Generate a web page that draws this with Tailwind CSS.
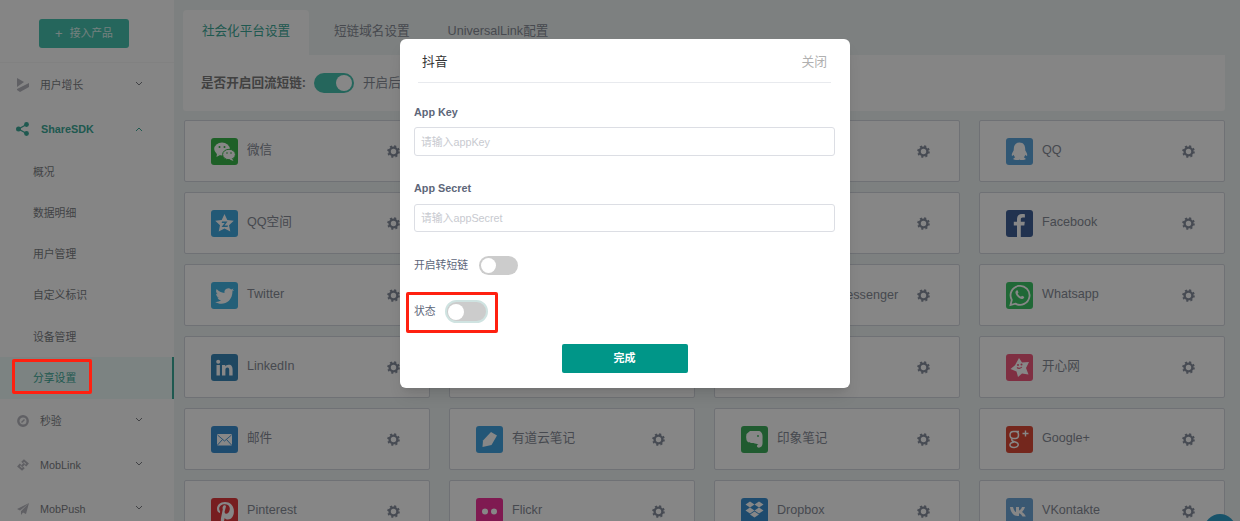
<!DOCTYPE html>
<html lang="zh">

<head>
    <meta charset="UTF-8">
    <title>分享设置</title>
    <script src="https://cdn.jsdelivr.net/npm/@tailwindcss/browser@4"></script>
</head>

<body class="relative h-[521px] overflow-hidden bg-[#edf2f1] font-['Liberation_Sans','Noto_Sans_CJK_SC',sans-serif]">

    <svg class="hidden">
        <symbol id="gear" viewBox="0 0 14 14">
            <circle cx="7" cy="7" r="4.2" fill="none" stroke="currentColor" stroke-width="2.6" />
            <circle cx="7" cy="7" r="5.9" fill="none" stroke="currentColor" stroke-width="1.8" stroke-dasharray="2.3 2.33" />
        </symbol>
        <symbol id="down" viewBox="0 0 8 5">
            <path d="M1 1l3 3 3-3" fill="none" stroke="currentColor" stroke-width="1" />
        </symbol>
    </svg>

    <div class="flex h-full">
        <!-- sidebar -->
        <aside class="w-[174px] shrink-0 bg-[#fbfbfb] text-[10.8px] text-[#7c7e83]">
            <div class="h-[63px] border-b border-[#f3f3f3] pt-[19px] pl-[39px]">
                <button class="flex h-[29px] w-[90px] items-center justify-center gap-[7px] rounded-[3px] bg-[#46c0ae] text-white/80">
                    <span class="text-[13px] leading-none">+</span><span>接入产品</span>
                </button>
            </div>
            <div class="flex h-[44px] items-center pr-[31px] pl-[17px]">
                <svg class="mr-[11px] h-[14px] w-[12px]" viewBox="0 0 12 14" fill="#b5b5bd">
                    <path d="M0 0l7 4-7 5zM12 5v4l-9 5-3-2v-1z" />
                </svg>
                <span>用户增长</span>
                <svg class="mb-[3px] ml-auto h-[5px] w-[8px]"><use href="#down" /></svg>
            </div>
            <div class="flex h-[44px] items-center pr-[31px] pl-[16px] font-bold text-[#3ca897]">
                <svg class="mr-[12px] h-[14px] w-[13px]" viewBox="0 0 13 14" fill="currentColor">
                    <circle cx="10.5" cy="2.5" r="2.4" /><circle cx="2.5" cy="7" r="2.5" /><circle cx="10.5" cy="11.5" r="2.4" />
                    <path d="M10.5 2.5L2.5 7l8 4.5" fill="none" stroke="currentColor" stroke-width="1.3" />
                </svg>
                <span>ShareSDK</span>
                <svg class="ml-auto h-[5px] w-[8px] rotate-180"><use href="#down" /></svg>
            </div>
            <div class="flex h-[41.25px] items-center pl-[33px]">概况</div>
            <div class="flex h-[41.25px] items-center pl-[33px]">数据明细</div>
            <div class="flex h-[41.25px] items-center pl-[33px]">用户管理</div>
            <div class="flex h-[41.25px] items-center pl-[33px]">自定义标识</div>
            <div class="flex h-[41.25px] items-center pl-[33px]">设备管理</div>
            <div class="flex h-[41.75px] items-center border-r-2 border-[#3ca897] bg-[#eaf8f5] pl-[33px] text-[#3ca897]">分享设置</div>
            <div class="flex h-[44px] items-center pr-[31px] pl-[17px]">
                <svg class="mr-[11px] h-[12px] w-[12px]" viewBox="0 0 12 12">
                    <circle cx="6" cy="6" r="4.7" fill="none" stroke="#b5b5bd" stroke-width="2.4" />
                    <path d="M4.5 7.5L7.5 4.5" stroke="#b5b5bd" stroke-width="1.4" />
                </svg>
                <span>秒验</span>
                <svg class="mb-[3px] ml-auto h-[5px] w-[8px]"><use href="#down" /></svg>
            </div>
            <div class="flex h-[44px] items-center pr-[31px] pl-[17px]">
                <svg class="mr-[11px] h-[12px] w-[12px]" viewBox="0 0 12 12" fill="none" stroke="#b5b5bd" stroke-width="2">
                    <path d="M5 3.5L7 1.5l3.5 3-2 2.300M7 8.500L5 10.500l-3.500-3 2-2.300M4.500 7.500l3-3" />
                </svg>
                <span>MobLink</span>
                <svg class="mb-[3px] ml-auto h-[5px] w-[8px]"><use href="#down" /></svg>
            </div>
            <div class="flex h-[44px] items-center pr-[31px] pl-[17px]">
                <svg class="mr-[11px] h-[12px] w-[12px]" viewBox="0 0 12 12" fill="#b5b5bd">
                    <path d="M12 0L0 6l3 1.600zM12 0L4 8.200V12l2-2.600 3 1.600z" />
                </svg>
                <span>MobPush</span>
                <svg class="mb-[3px] ml-auto h-[5px] w-[8px]"><use href="#down" /></svg>
            </div>
        </aside>

        <!-- main -->
        <main class="w-[1051px] pt-[10px] pl-[9px] text-[12.6px] text-[#868b96]">
            <div class="flex h-[45px] items-center">
                <div class="flex h-full w-[126px] items-center justify-center rounded-t-[4px] bg-[#fbfbfb] pb-[2px] text-[#3ca897]">社会化平台设置</div>
                <div class="ml-[25px] pb-[2px]">短链域名设置</div>
                <div class="ml-[38px] pb-[2px]">UniversalLink配置</div>
            </div>
            <div class="flex h-[56px] items-center rounded-b-[3px] bg-[#fbfbfb] pl-[18px]">
                <span class="font-bold text-[#7c7c7c]">是否开启回流短链:</span>
                <span class="ml-[8px] flex h-[20px] w-[40px] items-center justify-end rounded-full bg-[#46c0ae] pr-[2px]"><span class="h-[16px] w-[16px] rounded-full bg-white"></span></span>
                <span class="ml-[9px]">开启后</span>
            </div>
            <div class="mt-[9px] grid grid-cols-[repeat(4,246px)] gap-x-[19px] gap-y-[10px] pl-[1px]">

                <div class="flex h-[62px] items-center rounded-[2px] border border-[#d2d6de] bg-[#fdfdfd] pr-[29px] pl-[26px]">
                    <svg class="h-[27px] w-[27px]" viewBox="0 0 27 27"><rect width="27" height="27" rx="3" fill="#39b54a" /><ellipse cx="11" cy="11" rx="7.800" ry="6.400" fill="#fff" /><path d="M6 15.500l-.5 3.500 3.500-2z" fill="#fff" /><ellipse cx="18" cy="16.500" rx="6.400" ry="5.200" fill="#fff" stroke="#39b54a" /><path d="M21 20.500l1.500 2.500-4-1.500z" fill="#fff" /><circle cx="8.500" cy="9" r="1" fill="#39b54a" /><circle cx="13.500" cy="9" r="1" fill="#39b54a" /><circle cx="16" cy="15" r=".8" fill="#39b54a" /><circle cx="20" cy="15" r=".8" fill="#39b54a" /></svg>
                    <span class="mb-[1px] ml-[9px]">微信</span>
                    <svg class="ml-auto h-[13px] w-[13px] text-[#868e9d]"><use href="#gear" /></svg>
                </div>
                <div class="flex h-[62px] items-center rounded-[2px] border border-[#d2d6de] bg-[#fdfdfd] pr-[29px] pl-[26px]">
                    <svg class="ml-auto h-[13px] w-[13px] text-[#868e9d]"><use href="#gear" /></svg>
                </div>
                <div class="flex h-[62px] items-center rounded-[2px] border border-[#d2d6de] bg-[#fdfdfd] pr-[29px] pl-[26px]">
                    <svg class="ml-auto h-[13px] w-[13px] text-[#868e9d]"><use href="#gear" /></svg>
                </div>
                <div class="flex h-[62px] items-center rounded-[2px] border border-[#d2d6de] bg-[#fdfdfd] pr-[29px] pl-[26px]">
                    <svg class="h-[27px] w-[27px]" viewBox="0 0 27 27"><rect width="27" height="27" rx="3" fill="#5ba4dc" /><path d="M13.500 4.500c-4 0-5.700 3-5.700 6.300 0 1.200-.1 1.700-.6 2.500-1 1.600-1.700 3.200-1.300 4.500.5.500 1.200-.3 1.700-1 .4 1.300 1 2 1.500 2.600-1.300.5-2 1.100-1.700 1.800.6.800 5.500 1 6.100.2.600.8 5.500.6 6.100-.2.300-.7-.4-1.300-1.700-1.800.5-.6 1.100-1.300 1.500-2.600.5.700 1.200 1.500 1.700 1 .4-1.300-.3-2.900-1.300-4.500-.5-.8-.6-1.300-.6-2.500 0-3.300-1.700-6.300-5.700-6.300z" fill="#fff" /></svg>
                    <span class="mb-[1px] ml-[9px]">QQ</span>
                    <svg class="ml-auto h-[13px] w-[13px] text-[#868e9d]"><use href="#gear" /></svg>
                </div>

                <div class="flex h-[62px] items-center rounded-[2px] border border-[#d2d6de] bg-[#fdfdfd] pr-[29px] pl-[26px]">
                    <svg class="h-[27px] w-[27px]" viewBox="0 0 27 27"><rect width="27" height="27" rx="3" fill="#41a8df" /><path d="M13.500 4l2.800 6 6.500.8-4.800 4.400 1.300 6.400-5.800-3.200-5.800 3.200 1.300-6.400-4.800-4.400 6.500-.8z" fill="#fff" /><path d="M11 11.500h5.500l-3 4h3.500l-.5 1.500h-6l3.200-4h-3z" fill="#41a8df" /></svg>
                    <span class="mb-[1px] ml-[9px]">QQ空间</span>
                    <svg class="ml-auto h-[13px] w-[13px] text-[#868e9d]"><use href="#gear" /></svg>
                </div>
                <div class="flex h-[62px] items-center rounded-[2px] border border-[#d2d6de] bg-[#fdfdfd] pr-[29px] pl-[26px]">
                    <svg class="ml-auto h-[13px] w-[13px] text-[#868e9d]"><use href="#gear" /></svg>
                </div>
                <div class="flex h-[62px] items-center rounded-[2px] border border-[#d2d6de] bg-[#fdfdfd] pr-[29px] pl-[26px]">
                    <svg class="ml-auto h-[13px] w-[13px] text-[#868e9d]"><use href="#gear" /></svg>
                </div>
                <div class="flex h-[62px] items-center rounded-[2px] border border-[#d2d6de] bg-[#fdfdfd] pr-[29px] pl-[26px]">
                    <svg class="h-[27px] w-[27px]" viewBox="0 0 27 27"><rect width="27" height="27" rx="3" fill="#3f5f95" /><path d="M14.800 27V15.500h3.500l.5-3.800h-4v-2.300c0-1.200.5-1.900 1.900-1.900h2.200V4.200c-.6-.1-1.700-.2-2.900-.2-3 0-5 1.800-5 5v2.700H7.800v3.800H11V27z" fill="#fff" /></svg>
                    <span class="mb-[1px] ml-[9px]">Facebook</span>
                    <svg class="ml-auto h-[13px] w-[13px] text-[#868e9d]"><use href="#gear" /></svg>
                </div>

                <div class="flex h-[62px] items-center rounded-[2px] border border-[#d2d6de] bg-[#fdfdfd] pr-[29px] pl-[26px]">
                    <svg class="h-[27px] w-[27px]" viewBox="0 0 27 27"><rect width="27" height="27" rx="3" fill="#42b4e3" /><path d="M23 8c-.7.3-1.400.5-2.200.6.800-.5 1.400-1.200 1.700-2.100-.7.400-1.600.8-2.400.9a3.900 3.900 0 0 0-6.600 3.500C10.300 10.800 7.500 9.300 5.600 7c-1 1.800-.5 4 1.200 5.200-.6 0-1.200-.2-1.700-.5 0 1.900 1.300 3.500 3.100 3.900-.6.100-1.200.2-1.800 0 .5 1.500 1.900 2.600 3.600 2.700-1.700 1.300-3.700 1.900-5.800 1.600 6.600 4.200 17.300 1 17.300-11C22 9.400 22.600 8.700 23 8z" fill="#fff" /></svg>
                    <span class="mb-[1px] ml-[9px]">Twitter</span>
                    <svg class="ml-auto h-[13px] w-[13px] text-[#868e9d]"><use href="#gear" /></svg>
                </div>
                <div class="flex h-[62px] items-center rounded-[2px] border border-[#d2d6de] bg-[#fdfdfd] pr-[29px] pl-[26px]">
                    <svg class="ml-auto h-[13px] w-[13px] text-[#868e9d]"><use href="#gear" /></svg>
                </div>
                <div class="flex h-[62px] items-center rounded-[2px] border border-[#d2d6de] bg-[#fdfdfd] pr-[29px] pl-[26px]">
                    <span class="ml-[36px]">Facebook Messenger</span>
                    <svg class="ml-auto h-[13px] w-[13px] text-[#868e9d]"><use href="#gear" /></svg>
                </div>
                <div class="flex h-[62px] items-center rounded-[2px] border border-[#d2d6de] bg-[#fdfdfd] pr-[29px] pl-[26px]">
                    <svg class="h-[27px] w-[27px]" viewBox="0 0 27 27"><rect width="27" height="27" rx="3" fill="#3ec567" /><path d="M4.500 23l1.300-5a9.500 9.500 0 1 1 3.600 3.600z" fill="none" stroke="#fff" stroke-width="1.800" /><path d="M10.500 8.500c-1.500 1-1.500 3 .5 5.500s4.500 3.500 6 2.800c1-.5 1.500-1.500 1-2l-2-1-1 1c-1.200-.3-2.800-1.800-3.300-3.200l.8-1-.8-2.200c-.4-.3-.8-.2-1.200.1z" fill="#fff" /></svg>
                    <span class="mb-[1px] ml-[9px]">Whatsapp</span>
                    <svg class="ml-auto h-[13px] w-[13px] text-[#868e9d]"><use href="#gear" /></svg>
                </div>

                <div class="flex h-[62px] items-center rounded-[2px] border border-[#d2d6de] bg-[#fdfdfd] pr-[29px] pl-[26px]">
                    <svg class="h-[27px] w-[27px]" viewBox="0 0 27 27"><rect width="27" height="27" rx="3" fill="#3a87b8" /><path d="M5.500 11h3.400v10.500H5.500z" fill="#fff" /><circle cx="7.200" cy="7.700" r="2" fill="#fff" /><path d="M11 11h3.200v1.500c.6-1 1.800-1.800 3.400-1.800 3.200 0 4 2.100 4 5v5.800h-3.400v-5.200c0-1.400-.3-2.700-1.800-2.700s-2 1.200-2 2.600v5.300H11z" fill="#fff" /></svg>
                    <span class="mb-[1px] ml-[9px]">LinkedIn</span>
                    <svg class="ml-auto h-[13px] w-[13px] text-[#868e9d]"><use href="#gear" /></svg>
                </div>
                <div class="flex h-[62px] items-center rounded-[2px] border border-[#d2d6de] bg-[#fdfdfd] pr-[29px] pl-[26px]">
                    <svg class="ml-auto h-[13px] w-[13px] text-[#868e9d]"><use href="#gear" /></svg>
                </div>
                <div class="flex h-[62px] items-center rounded-[2px] border border-[#d2d6de] bg-[#fdfdfd] pr-[29px] pl-[26px]">
                    <svg class="ml-auto h-[13px] w-[13px] text-[#868e9d]"><use href="#gear" /></svg>
                </div>
                <div class="flex h-[62px] items-center rounded-[2px] border border-[#d2d6de] bg-[#fdfdfd] pr-[29px] pl-[26px]">
                    <svg class="h-[27px] w-[27px]" viewBox="0 0 27 27"><rect width="27" height="27" rx="3" fill="#f05a7e" /><path d="M13 4l3 4.500 7-.5-3 6 2.500 6.500-6.500-1-4 3.500-1.500-5.500-6-2.500 4.500-3.800z" fill="#fff" /><circle cx="12" cy="11" r="1" fill="#f05a7e" /><circle cx="15.500" cy="10.500" r="1" fill="#f05a7e" /><path d="M11 13.500c1.200 1.200 3.500 1.200 4.800-.5" fill="none" stroke="#f05a7e" stroke-width="1.200" /></svg>
                    <span class="mb-[1px] ml-[9px]">开心网</span>
                    <svg class="ml-auto h-[13px] w-[13px] text-[#868e9d]"><use href="#gear" /></svg>
                </div>

                <div class="flex h-[62px] items-center rounded-[2px] border border-[#d2d6de] bg-[#fdfdfd] pr-[29px] pl-[26px]">
                    <svg class="h-[27px] w-[27px]" viewBox="0 0 27 27"><rect width="27" height="27" rx="3" fill="#3a8fd0" /><rect x="6" y="8" width="15" height="11.500" rx="1" fill="#fff" /><path d="M6.500 9l7 6 7-6M6.500 19l5-5.500M20.500 19l-5-5.500" fill="none" stroke="#3a8fd0" stroke-width=".9" /></svg>
                    <span class="mb-[1px] ml-[9px]">邮件</span>
                    <svg class="ml-auto h-[13px] w-[13px] text-[#868e9d]"><use href="#gear" /></svg>
                </div>
                <div class="flex h-[62px] items-center rounded-[2px] border border-[#d2d6de] bg-[#fdfdfd] pr-[29px] pl-[26px]">
                    <svg class="h-[27px] w-[27px]" viewBox="0 0 27 27"><rect width="27" height="27" rx="3" fill="#41a3e0" /><path d="M15 6l6 3.500-5.500 9.500-9 2 .5-6.500z" fill="#fff" /></svg>
                    <span class="mb-[1px] ml-[9px]">有道云笔记</span>
                    <svg class="ml-auto h-[13px] w-[13px] text-[#868e9d]"><use href="#gear" /></svg>
                </div>
                <div class="flex h-[62px] items-center rounded-[2px] border border-[#d2d6de] bg-[#fdfdfd] pr-[29px] pl-[26px]">
                    <svg class="h-[27px] w-[27px]" viewBox="0 0 27 27"><rect width="27" height="27" rx="3" fill="#3dad5b" /><path d="M9 5h9c3 .5 4 4 3.500 8 0 3 .5 6-1 7.500-1.500 1.500-4 1.500-4.500 0-.3-1.200.8-2 2-1.500-1.500-1.500-4-1-5.500-2C10 17 6.500 17 5.500 14c-.5-2-.5-4 0-6z" fill="#fff" /><circle cx="17" cy="10" r=".9" fill="#3dad5b" /></svg>
                    <span class="mb-[1px] ml-[9px]">印象笔记</span>
                    <svg class="ml-auto h-[13px] w-[13px] text-[#868e9d]"><use href="#gear" /></svg>
                </div>
                <div class="flex h-[62px] items-center rounded-[2px] border border-[#d2d6de] bg-[#fdfdfd] pr-[29px] pl-[26px]">
                    <svg class="h-[27px] w-[27px]" viewBox="0 0 27 27"><rect width="27" height="27" rx="3" fill="#dc4b38" /><path d="M11 5.500H7.500C5.500 5.500 4 7 4 9s1.500 3.500 3.500 3.500h2c1.800 0 3-1.500 3-3.500s-1.200-3.500-3-3.500zM6.500 12.500c-1 .8-1 1.800 0 2.500l4 1.500c2.200 1 2 2.800 1 3.800-1.500 1.400-5 1.500-6.700.3-1.400-1-1-3 .7-3.800l2.500-.8M10 5.500h3" fill="none" stroke="#fff" stroke-width="1.500" /><path d="M16.500 7.500h6M19.500 4.500v6" stroke="#fff" stroke-width="1.400" /></svg>
                    <span class="mb-[1px] ml-[9px]">Google+</span>
                    <svg class="ml-auto h-[13px] w-[13px] text-[#868e9d]"><use href="#gear" /></svg>
                </div>

                <div class="flex h-[62px] items-center rounded-[2px] border border-[#d2d6de] bg-[#fdfdfd] pr-[29px] pl-[26px]">
                    <svg class="h-[27px] w-[27px]" viewBox="0 0 27 27"><rect width="27" height="27" rx="3" fill="#e03a3e" /><path d="M14 4c-5 0-8 3.200-8 6.800 0 2 1 3.700 2.500 4.200.5 0 .8-1.300.5-1.800-2.300-3.500.6-7 4.700-7 4 0 5.500 2.500 5 5.500-.5 3-2.500 4.500-4 4-1-.5-1.300-1.200-1-2.400l1.200-4.500c.3-2-2.800-2.500-3.300.5-.1.800 0 1.500.2 2L10 20c-.3 2 0 5 .2 7h1c1-1.500 2-4.500 2.500-7 .8 1 2 1.500 3.200 1.500 3.500 0 6-3.500 6-8C23 8 19.500 4 14 4z" fill="#fff" /></svg>
                    <span class="mb-[1px] ml-[9px]">Pinterest</span>
                    <svg class="ml-auto h-[13px] w-[13px] text-[#868e9d]"><use href="#gear" /></svg>
                </div>
                <div class="flex h-[62px] items-center rounded-[2px] border border-[#d2d6de] bg-[#fdfdfd] pr-[29px] pl-[26px]">
                    <svg class="h-[27px] w-[27px]" viewBox="0 0 27 27"><rect width="27" height="27" rx="3" fill="#f0329a" /><circle cx="9" cy="13.500" r="3" fill="#fff" /><circle cx="18" cy="13.500" r="3" fill="#fff" /></svg>
                    <span class="mb-[1px] ml-[9px]">Flickr</span>
                    <svg class="ml-auto h-[13px] w-[13px] text-[#868e9d]"><use href="#gear" /></svg>
                </div>
                <div class="flex h-[62px] items-center rounded-[2px] border border-[#d2d6de] bg-[#fdfdfd] pr-[29px] pl-[26px]">
                    <svg class="h-[27px] w-[27px]" viewBox="0 0 27 27"><rect width="27" height="27" rx="3" fill="#3a8fd0" /><path d="M9 3.500l4.500 3-4.500 3-4.500-3zM18 3.500l4.500 3-4.500 3-4.500-3zM9 9.500l4.500 3-4.500 3-4.500-3zM18 9.500l4.500 3-4.500 3-4.500-3zM13.500 13.500l4.500 3-4.500 3-4.500-3z" fill="#fff" /></svg>
                    <span class="mb-[1px] ml-[9px]">Dropbox</span>
                    <svg class="ml-auto h-[13px] w-[13px] text-[#868e9d]"><use href="#gear" /></svg>
                </div>
                <div class="flex h-[62px] items-center rounded-[2px] border border-[#d2d6de] bg-[#fdfdfd] pr-[29px] pl-[26px]">
                    <svg class="h-[27px] w-[27px]" viewBox="0 0 27 27"><rect width="27" height="27" rx="3" fill="#6fa6d8" /><path d="M4 9h3c.5 2.500 2 5 3 5V9h3v3.500c1 0 2.500-2 3-3.500h3c-.5 2-2 4-3 5 1.200.8 3 2.500 3.800 4.500h-3.300c-.7-1.500-2-3-3.500-3.300V18h-1.500C7.500 18 4.500 14 4 9z" fill="#fff" /></svg>
                    <span class="mb-[1px] ml-[9px]">VKontakte</span>
                    <svg class="ml-auto h-[13px] w-[13px] text-[#868e9d]"><use href="#gear" /></svg>
                </div>
            </div>
        </main>
    </div>

    <div class="absolute top-[514px] left-[1204px] h-[32px] w-[32px] rounded-full bg-[#2f9ec9]"></div>

    <!-- dim -->
    <div class="absolute inset-0 bg-black/[0.47]"></div>

    <!-- red mark on the menu -->
    <div class="absolute top-[359px] left-[12px] h-[35px] w-[80px] rounded-[2px] border-[3px] border-[#ff2010]"></div>

    <!-- dialog -->
    <div class="absolute top-[39px] left-[400px] h-[349px] w-[450px] rounded-[6px] bg-white pr-[15px] pl-[14px] text-[10.8px] text-[#5d6679] shadow-lg">
        <div class="mx-[4px] flex h-[44px] items-center justify-between border-b border-[#e8eaee] pt-[3px] pr-[4px] pl-[4px] text-[12.8px]">
            <span class="text-[#333]">抖音</span>
            <span class="text-[#b0b0b0]">关闭</span>
        </div>
        <div class="mt-[23px] h-[13px] leading-[13px] font-bold">App Key</div>
        <div class="mt-[8px] flex h-[29px] items-center rounded-[3px] border border-[#dcdee4] pt-[1px] pl-[6px] text-[#c8cad0]">请输入appKey</div>
        <div class="mt-[26px] h-[13px] leading-[13px] font-bold">App Secret</div>
        <div class="mt-[9px] flex h-[28px] items-center rounded-[3px] border border-[#dcdee4] pt-[1px] pl-[6px] text-[#c8cad0]">请输入appSecret</div>
        <div class="mt-[24px] flex h-[19px] items-center">
            <span>开启转短链</span>
            <span class="ml-[11px] flex h-[19px] w-[39px] items-center rounded-full bg-[#cccccc] pl-[2px]"><span class="h-[15px] w-[15px] rounded-full bg-white"></span></span>
        </div>
        <div class="mt-[25px] flex h-[23px] items-center">
            <span>状态</span>
            <span class="ml-[9px] flex h-[23px] w-[43px] items-center rounded-full border-2 border-[#cfe3e1] bg-[#cccccc] pl-[1px]"><span class="h-[16px] w-[16px] rounded-full bg-white"></span></span>
        </div>
        <div class="mt-[21px] flex justify-center">
            <button class="h-[29px] w-[126px] rounded-[2px] bg-[#009688] text-[11px] font-bold text-white">完成</button>
        </div>
        <div class="absolute top-[253px] left-[6px] h-[41px] w-[92px] rounded-[2px] border-[3px] border-[#ff2010]"></div>
    </div>

</body>

</html>
